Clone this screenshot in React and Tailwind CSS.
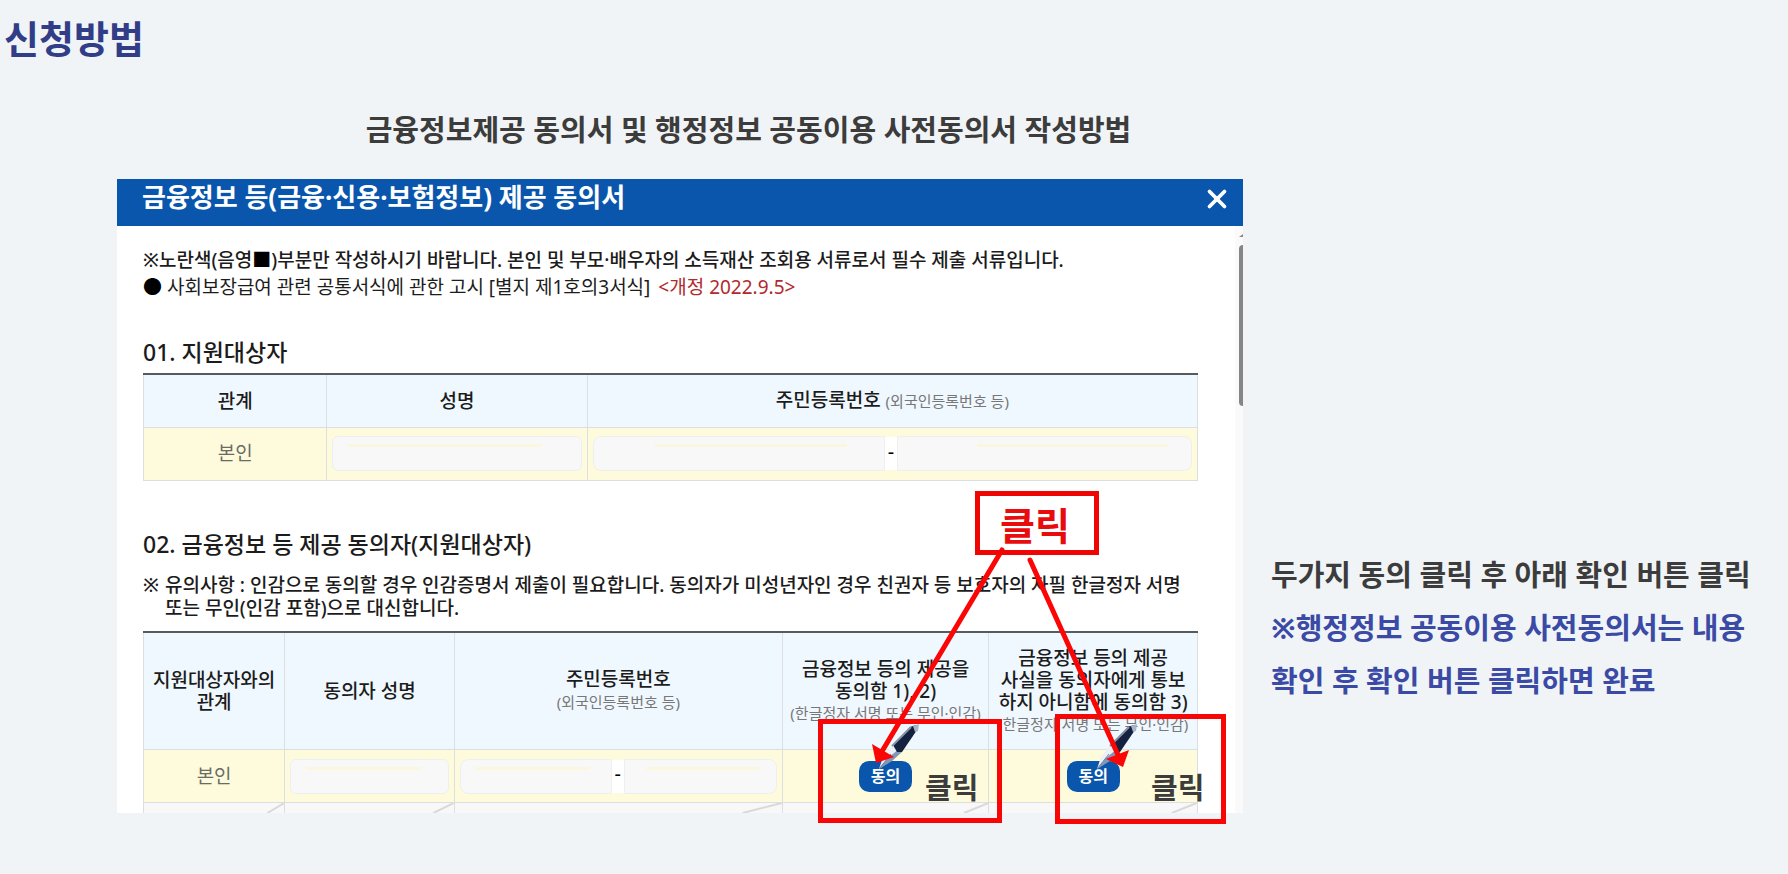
import { X } from 'lucide-react';

const headCell = 'border border-[#dcdfe2] border-t-2 border-t-[#555b5e] bg-[#f0f8ff] font-medium leading-[22px] text-[#1c1c1c]';
const bodyCell = 'h-[53px] border border-[#dcdfe2] bg-[#fefbdc]';

// Read-only field with the pale highlight strip near its top
function Field({ label, className = '', strip = 'left-4 right-10' }) {
  return (
    <div className={`relative flex-1 ${className}`}>
      <input
        type="text"
        aria-label={label}
        readOnly
        className="block h-[35px] w-full rounded-[inherit] border border-[#efefef] bg-[#f8f8f8] px-3 outline-none"
      />
      <span className={`pointer-events-none absolute top-2 h-[3px] bg-[#fbf7df] ${strip}`} />
    </div>
  );
}

function NumberFields({ firstStrip, secondStrip, split }) {
  return (
    <div className="mx-[5px] flex items-center">
      <Field label="주민등록번호 앞자리" className="rounded-l-lg" strip={firstStrip} />
      <span className="flex h-[33px] w-3 items-center justify-center bg-white pb-1 text-xl text-black">-</span>
      <div className={`flex ${split}`}>
        <Field label="주민등록번호 뒷자리" className="rounded-r-lg" strip={secondStrip} />
      </div>
    </div>
  );
}

function EmptyCell() {
  return (
    <td className="h-[11px] border border-b-0 border-[#dcdfe2] bg-[#f8f8f8] p-0">
      <svg className="block h-[10px] w-full" viewBox="0 0 100 10" preserveAspectRatio="none" fill="none">
        <path d="M88 10L100 0" stroke="#d9d9d9" strokeWidth="2" vectorEffect="non-scaling-stroke" />
      </svg>
    </td>
  );
}

function Pen({ className }) {
  return (
    <svg className={`absolute h-[46px] w-[42px] ${className}`} viewBox="0 0 42 46" fill="none">
      <path d="M1 45L5 33L15 20L23 28L14 36Z" fill="#edf0f5" />
      <path d="M1 45L14 37L24 28L21 25L10 34Z" fill="#8496b8" />
      <path d="M1 45L13 30" stroke="#6d7c9c" strokeWidth="1" />
      <path d="M15 21L32 3L38 1L39 6L24 28L19 28Z" fill="#14213f" />
      <path d="M14 22L33 3" stroke="#8793a8" strokeWidth="2" />
      <path d="M35 2L41 0L40 7L37 8Z" fill="#a9b4c8" />
    </svg>
  );
}

// Red marks drawn over the right side of the form
function Annotations() {
  return (
    <div className="pointer-events-none absolute top-0 right-0 h-[646px] w-[283px]">
      <Pen className="top-[545px] left-[-82px]" />
      <Pen className="top-[545px] left-[136px]" />
      <svg className="absolute top-0 right-0 h-[646px] w-[443px]" viewBox="800 179 443 646" fill="none">
        <path d="M1002 550L881 753M1030 560L1119 757" stroke="#fb0505" strokeWidth="5" strokeLinecap="round" />
        <path d="M872 744L894 757L876 763Z" fill="#fb0505" />
        <path d="M1106 759L1129 750L1123 767Z" fill="#fb0505" />
      </svg>
      <div className="absolute top-[312px] left-[15px] flex h-[64px] w-[124px] items-center justify-center border-5 border-[#f00505] pt-1 pr-1 text-[38px] leading-none font-bold text-[#e80c0c]">
        클릭
      </div>
      <div className="absolute top-[540px] left-[-142px] h-[104px] w-[184px] border-5 border-[#f80505]" />
      <div className="absolute top-[535px] left-[95px] h-[110px] w-[171px] border-5 border-[#f80505]" />
      <span className="absolute top-[594px] left-[-35px] text-[29px] leading-none font-bold text-[#3c3c3c]">클릭</span>
      <span className="absolute top-[594px] left-[191px] text-[29px] leading-none font-bold text-[#3c3c3c]">클릭</span>
    </div>
  );
}

function ConsentForm() {
  return (
    <div className="relative min-w-0 flex-1">
      <div className="overflow-hidden bg-white">
        <header className="flex h-[47px] items-start justify-between bg-[#0a56ad] pr-[11px] pl-[25px]">
          <h3 className="text-[26px] leading-[36px] font-bold text-white">금융정보 등(금융·신용·보험정보) 제공 동의서</h3>
          <button type="button" aria-label="닫기" className="mt-[5px] text-white">
            <X size={30} strokeWidth={3} />
          </button>
        </header>

        <div className="relative flex h-[587px] overflow-hidden">
          <div className="min-w-0 flex-1 pr-[37px] pl-[26px] text-[19px] text-[#1c1c1c]">
            <p className="mt-[21px] leading-[27px] font-medium">
              ※노란색(음영<span className="text-black">■</span>)부분만 작성하시기 바랍니다. 본인 및 부모·배우자의 소득재산 조회용 서류로서 필수 제출 서류입니다.
            </p>
            <p className="leading-[27px]">
              <span className="text-black">●</span> 사회보장급여 관련 공통서식에 관한 고시 [별지 제1호의3서식]
              <span className="ml-2 text-[#b02a2e]">&lt;개정 2022.9.5&gt;</span>
            </p>

            <h4 className="mt-[35px] text-[23px] leading-8 font-medium">01. 지원대상자</h4>
            <table className="mt-[5px] w-full table-fixed border-collapse text-center">
              <colgroup>
                <col className="w-[17.4%]" />
                <col className="w-[24.7%]" />
                <col />
              </colgroup>
              <thead>
                <tr className="h-[53px]">
                  <th className={headCell}>관계</th>
                  <th className={headCell}>성명</th>
                  <th className={headCell}>
                    주민등록번호 <span className="text-[15px] font-normal text-[#777]">(외국인등록번호 등)</span>
                  </th>
                </tr>
              </thead>
              <tbody>
                <tr>
                  <td className={`${bodyCell} text-[#6b6b66]`}>본인</td>
                  <td className={bodyCell}>
                    <div className="mx-[5px] flex">
                      <Field label="성명" className="rounded-md" />
                    </div>
                  </td>
                  <td className={bodyCell}>
                    <NumberFields firstStrip="left-[62px] right-[38px]" secondStrip="left-20 right-6" split="w-[295px]" />
                  </td>
                </tr>
              </tbody>
            </table>

            <h4 className="mt-[47px] text-[23px] leading-8 font-medium">02. 금융정보 등 제공 동의자(지원대상자)</h4>
            <div className="mt-[14px] flex leading-[23px] font-medium">
              <span className="w-[22px] shrink-0">※</span>
              <p>
                유의사항 : 인감으로 동의할 경우 인감증명서 제출이 필요합니다. 동의자가 미성년자인 경우 친권자 등 보호자의 자필 한글정자 서명
                <br />
                또는 무인(인감 포함)으로 대신합니다.
              </p>
            </div>
            <table className="mt-[11px] w-full table-fixed border-collapse text-center">
              <colgroup>
                <col className="w-[13.4%]" />
                <col className="w-[16.1%]" />
                <col />
                <col className="w-[19.6%]" />
                <col className="w-[19.8%]" />
              </colgroup>
              <thead>
                <tr className="h-[118px]">
                  <th className={headCell}>지원대상자와의<br />관계</th>
                  <th className={headCell}>동의자 성명</th>
                  <th className={headCell}>
                    주민등록번호<br />
                    <span className="text-[15px] font-normal text-[#777]">(외국인등록번호 등)</span>
                  </th>
                  <th className={headCell}>
                    금융정보 등의 제공을<br />동의함 1), 2)
                    <span className="block text-[15px] font-normal whitespace-nowrap text-[#777]">(한글정자 서명 또는 무인·인감)</span>
                  </th>
                  <th className={headCell}>
                    금융정보 등의 제공<br />사실을 동의자에게 통보<br />하지 아니함에 동의함 3)
                    <span className="block text-[15px] font-normal whitespace-nowrap text-[#777]">(한글정자 서명 또는 무인·인감)</span>
                  </th>
                </tr>
              </thead>
              <tbody>
                <tr>
                  <td className={`${bodyCell} text-[#6b6b66]`}>본인</td>
                  <td className={bodyCell}>
                    <div className="mx-[5px] flex">
                      <Field label="동의자 성명" className="rounded-md" strip="left-4 right-7" />
                    </div>
                  </td>
                  <td className={bodyCell}>
                    <NumberFields firstStrip="left-4 right-[22px]" secondStrip="left-[22px] right-4" split="w-[153px]" />
                  </td>
                  <td className={bodyCell}>
                    <button type="button" className="h-[31px] w-[53px] rounded-[10px] bg-[#0a56ad] text-base font-bold text-white">동의</button>
                  </td>
                  <td className={bodyCell}>
                    <button type="button" className="h-[31px] w-[53px] rounded-[10px] bg-[#0a56ad] text-base font-bold text-white">동의</button>
                  </td>
                </tr>
                <tr>
                  <EmptyCell />
                  <EmptyCell />
                  <EmptyCell />
                  <EmptyCell />
                  <EmptyCell />
                </tr>
              </tbody>
            </table>
          </div>

          {/* Scroll bar */}
          <div className="w-2 bg-[#fafafa] pt-2">
            <svg className="ml-1 block h-[3px] w-1" viewBox="0 0 4 3">
              <path d="M0 3L4 0V3Z" fill="#888" />
            </svg>
            <div className="mt-2 ml-1 h-[161px] rounded-l bg-[#858585]" />
          </div>
        </div>
      </div>
      <Annotations />
    </div>
  );
}

export default function App() {
  return (
    <main className="min-h-screen bg-[#f0f4f7] font-['Noto_Sans','Noto_Sans_CJK_KR',sans-serif]">
      <h1 className="pt-[13px] pl-[4px] text-[38px] leading-[50px] font-bold text-[#313d87]">신청방법</h1>
      <div className="flex pt-[47px] pl-[117px]">
        <div className="flex min-w-0 flex-1 flex-col">
          <h2 className="mb-[29px] pl-[137px] text-center text-[29px] leading-10 font-bold whitespace-nowrap text-[#3c3c3c]">
            금융정보제공 동의서 및 행정정보 공동이용 사전동의서 작성방법
          </h2>
          <ConsentForm />
        </div>
        <aside className="w-[545px] shrink-0 pt-[438px] pl-[28px] text-[29px] leading-[53px] font-bold text-[#3c3c3c]">
          <p className="whitespace-nowrap">두가지 동의 클릭 후 아래 확인 버튼 클릭</p>
          <p className="text-[#3a4aa5]">
            ※행정정보 공동이용 사전동의서는 내용<br />확인 후 확인 버튼 클릭하면 완료
          </p>
        </aside>
      </div>
    </main>
  );
}
